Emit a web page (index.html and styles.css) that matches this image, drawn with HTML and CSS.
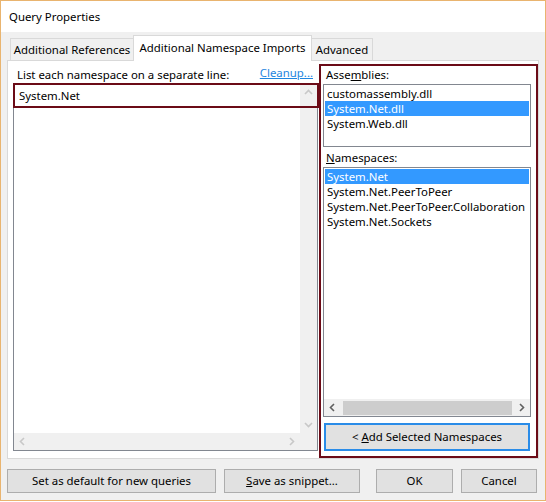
FILE: index.html
```html
<!DOCTYPE html>
<html>
<head>
<meta charset="utf-8">
<link rel="stylesheet" href="styles.css">
</head>
<body>
<div class="window">
  <div class="titlebar">Query Properties</div>
  <div class="client">
    <div class="tabstrip">
      <div class="tab tab-refs">Additional References</div>
      <div class="tab tab-active">Additional Namespace Imports</div>
      <div class="tab tab-adv">Advanced</div>
    </div>
    <div class="panel">
      <div class="left">
        <div class="left-head">
          <span>List each namespace on a separate line:</span>
          <span class="link">Cleanup...</span>
        </div>
        <div class="textarea">
          <div class="ta-content">System.Net</div>
          <div class="vscroll">
            <svg class="arrow" width="17" height="17" viewBox="0 0 17 17"><polyline points="5,10 8.5,6.5 12,10" fill="none" stroke="#c8c8c8" stroke-width="1.6"/></svg>
            <svg class="arrow" width="17" height="17" viewBox="0 0 17 17"><polyline points="5,7 8.5,10.5 12,7" fill="none" stroke="#c8c8c8" stroke-width="1.6"/></svg>
          </div>
          <div class="hscroll">
            <svg class="arrow" width="17" height="17" viewBox="0 0 17 17"><polyline points="10,5 6.5,8.5 10,12" fill="none" stroke="#c8c8c8" stroke-width="1.6"/></svg>
            <svg class="arrow" width="17" height="17" viewBox="0 0 17 17"><polyline points="7,5 10.5,8.5 7,12" fill="none" stroke="#c8c8c8" stroke-width="1.6"/></svg>
          </div>
          <div class="corner"></div>
          <div class="mark-line"></div>
        </div>
      </div>
      <div class="right">
        <div class="label">Asse<u>m</u>blies:</div>
        <div class="listbox asm">
          <div class="item">customassembly.dll</div>
          <div class="item selected">System.Net.dll</div>
          <div class="item">System.Web.dll</div>
        </div>
        <div class="label label-ns"><u>N</u>amespaces:</div>
        <div class="listbox ns">
          <div class="items">
            <div class="item selected">System.Net</div>
            <div class="item">System.Net.PeerToPeer</div>
            <div class="item">System.Net.PeerToPeer.Collaboration</div>
            <div class="item">System.Net.Sockets</div>
          </div>
          <div class="lb-hscroll">
            <svg class="arrow" width="17" height="15" viewBox="0 0 17 15"><polyline points="10,4 6.5,7.5 10,11" fill="none" stroke="#606060" stroke-width="1.6"/></svg>
            <div class="thumb"></div>
            <svg class="arrow" width="17" height="15" viewBox="0 0 17 15"><polyline points="7,4 10.5,7.5 7,11" fill="none" stroke="#606060" stroke-width="1.6"/></svg>
          </div>
        </div>
        <div class="btn btn-add">&lt; <u>A</u>dd Selected Namespaces</div>
      </div>
    </div>
    <div class="buttons">
      <div class="btn b-default">Set as default for new queries</div>
      <div class="btn b-snippet"><u>S</u>ave as snippet...</div>
      <div class="btn b-ok">OK</div>
      <div class="btn b-cancel">Cancel</div>
    </div>
  </div>
</div>
</body>
</html>
```

FILE: styles.css
```css
html, body {
  margin: 0;
  padding: 0;
  background: #ffffff;
}
body {
  width: 546px;
  height: 502px;
  overflow: hidden;
  font-family: "Segoe UI", "Noto Sans", sans-serif;
  font-size: 11.4px;
  color: #000;
}
.window {
  box-sizing: border-box;
  width: 546px;
  height: 501px;
  border: 1px solid #e9b46f;
  background: #f0f0f0;
  display: flex;
  flex-direction: column;
}
.titlebar {
  height: 31px;
  line-height: 31px;
  background: #fff;
  padding-left: 8px;
  flex: none;
}
.client {
  flex: 1;
  padding: 3px 0 0 6px;
}
.tabstrip {
  display: flex;
  align-items: flex-end;
  height: 25px;
  padding-left: 3px;
  position: relative;
  z-index: 1;
}
.tab {
  box-sizing: border-box;
  height: 22px;
  line-height: 21px;
  border: 1px solid #d9d9d9;
  border-bottom: none;
  background: #f0f0f0;
  text-align: center;
  white-space: nowrap;
}
.tab-refs { width: 124px; }
.tab-active {
  width: 179px;
  height: 26px;
  line-height: 24px;
  margin-left: -1px;
  margin-bottom: -1px;
  background: #fff;
  position: relative;
  z-index: 2;
}
.tab-adv { width: 62px; margin-left: -1px; }
.panel {
  box-sizing: border-box;
  width: 532px;
  height: 399px;
  border: 1px solid #d9d9d9;
  background: #fff;
  display: flex;
  padding-left: 5px;
}
.left {
  width: 305px;
  display: flex;
  flex-direction: column;
}
.left-head {
  height: 22px;
  box-sizing: border-box;
  padding: 6px 5px 0 4px;
  line-height: 15px;
  display: flex;
  justify-content: space-between;
}
.link {
  color: #1e86e0;
  text-decoration: underline;
  margin-top: -2px;
}
.textarea {
  position: relative;
  box-sizing: border-box;
  height: 368px;
  border: 1px solid #828790;
  display: grid;
  grid-template-columns: 1fr 17px;
  grid-template-rows: 1fr 17px;
}
.ta-content {
  padding: 4px 5px;
  line-height: 15px;
}
.vscroll {
  background: #f0f0f0;
  display: flex;
  flex-direction: column;
  justify-content: space-between;
}
.hscroll {
  background: #f0f0f0;
  display: flex;
  justify-content: space-between;
}
.corner { background: #f0f0f0; }
.arrow { display: block; flex: none; }
.mark-line {
  position: absolute;
  left: -1px;
  top: -1px;
  width: 306px;
  height: 25px;
  box-sizing: border-box;
  border: 2px solid #6b0b17;
}
.right {
  box-sizing: border-box;
  width: 219px;
  height: 394px;
  margin: 3px 0 0 1px;
  border: 2px solid #6b0b17;
  display: flex;
  flex-direction: column;
}
.label {
  height: 15px;
  line-height: 15px;
  margin: 1px 0 0 5px;
}
.label-ns { margin-top: 3px; }
.listbox {
  box-sizing: border-box;
  width: 208px;
  margin: 2px 0 0 2px;
  border: 1px solid #828790;
  background: #fff;
  padding-top: 1px;
}
.asm { height: 63px; }
.ns {
  height: 250px;
  display: flex;
  flex-direction: column;
}
.items { flex: 1; }
.item {
  height: 15px;
  line-height: 15px;
  margin: 0 1px;
  padding-left: 2px;
  white-space: nowrap;
}
.selected {
  background: #3399ff;
  color: #fff;
}
.lb-hscroll {
  height: 17px;
  background: #f0f0f0;
  display: flex;
  align-items: center;
  box-sizing: border-box;
  padding: 1px 0 1px;
}
.thumb {
  flex: 1;
  height: 14px;
  margin: 0 1px 0 2px;
  background: #cdcdcd;
}
.btn {
  box-sizing: border-box;
  height: 24px;
  line-height: 22px;
  border: 1px solid #adadad;
  background: #e1e1e1;
  text-align: center;
  white-space: nowrap;
}
.btn-add {
  width: 206px;
  height: 28px;
  line-height: 24px;
  margin: 6px 0 0 3px;
  border: 2px solid #2a8ce8;
}
.buttons {
  display: flex;
  margin-top: 10px;
}
.b-default { width: 209px; }
.b-snippet { width: 136px; margin-left: 8px; }
.b-ok { width: 77px; margin-left: 16px; }
.b-cancel { width: 76px; margin-left: 8px; }
```
